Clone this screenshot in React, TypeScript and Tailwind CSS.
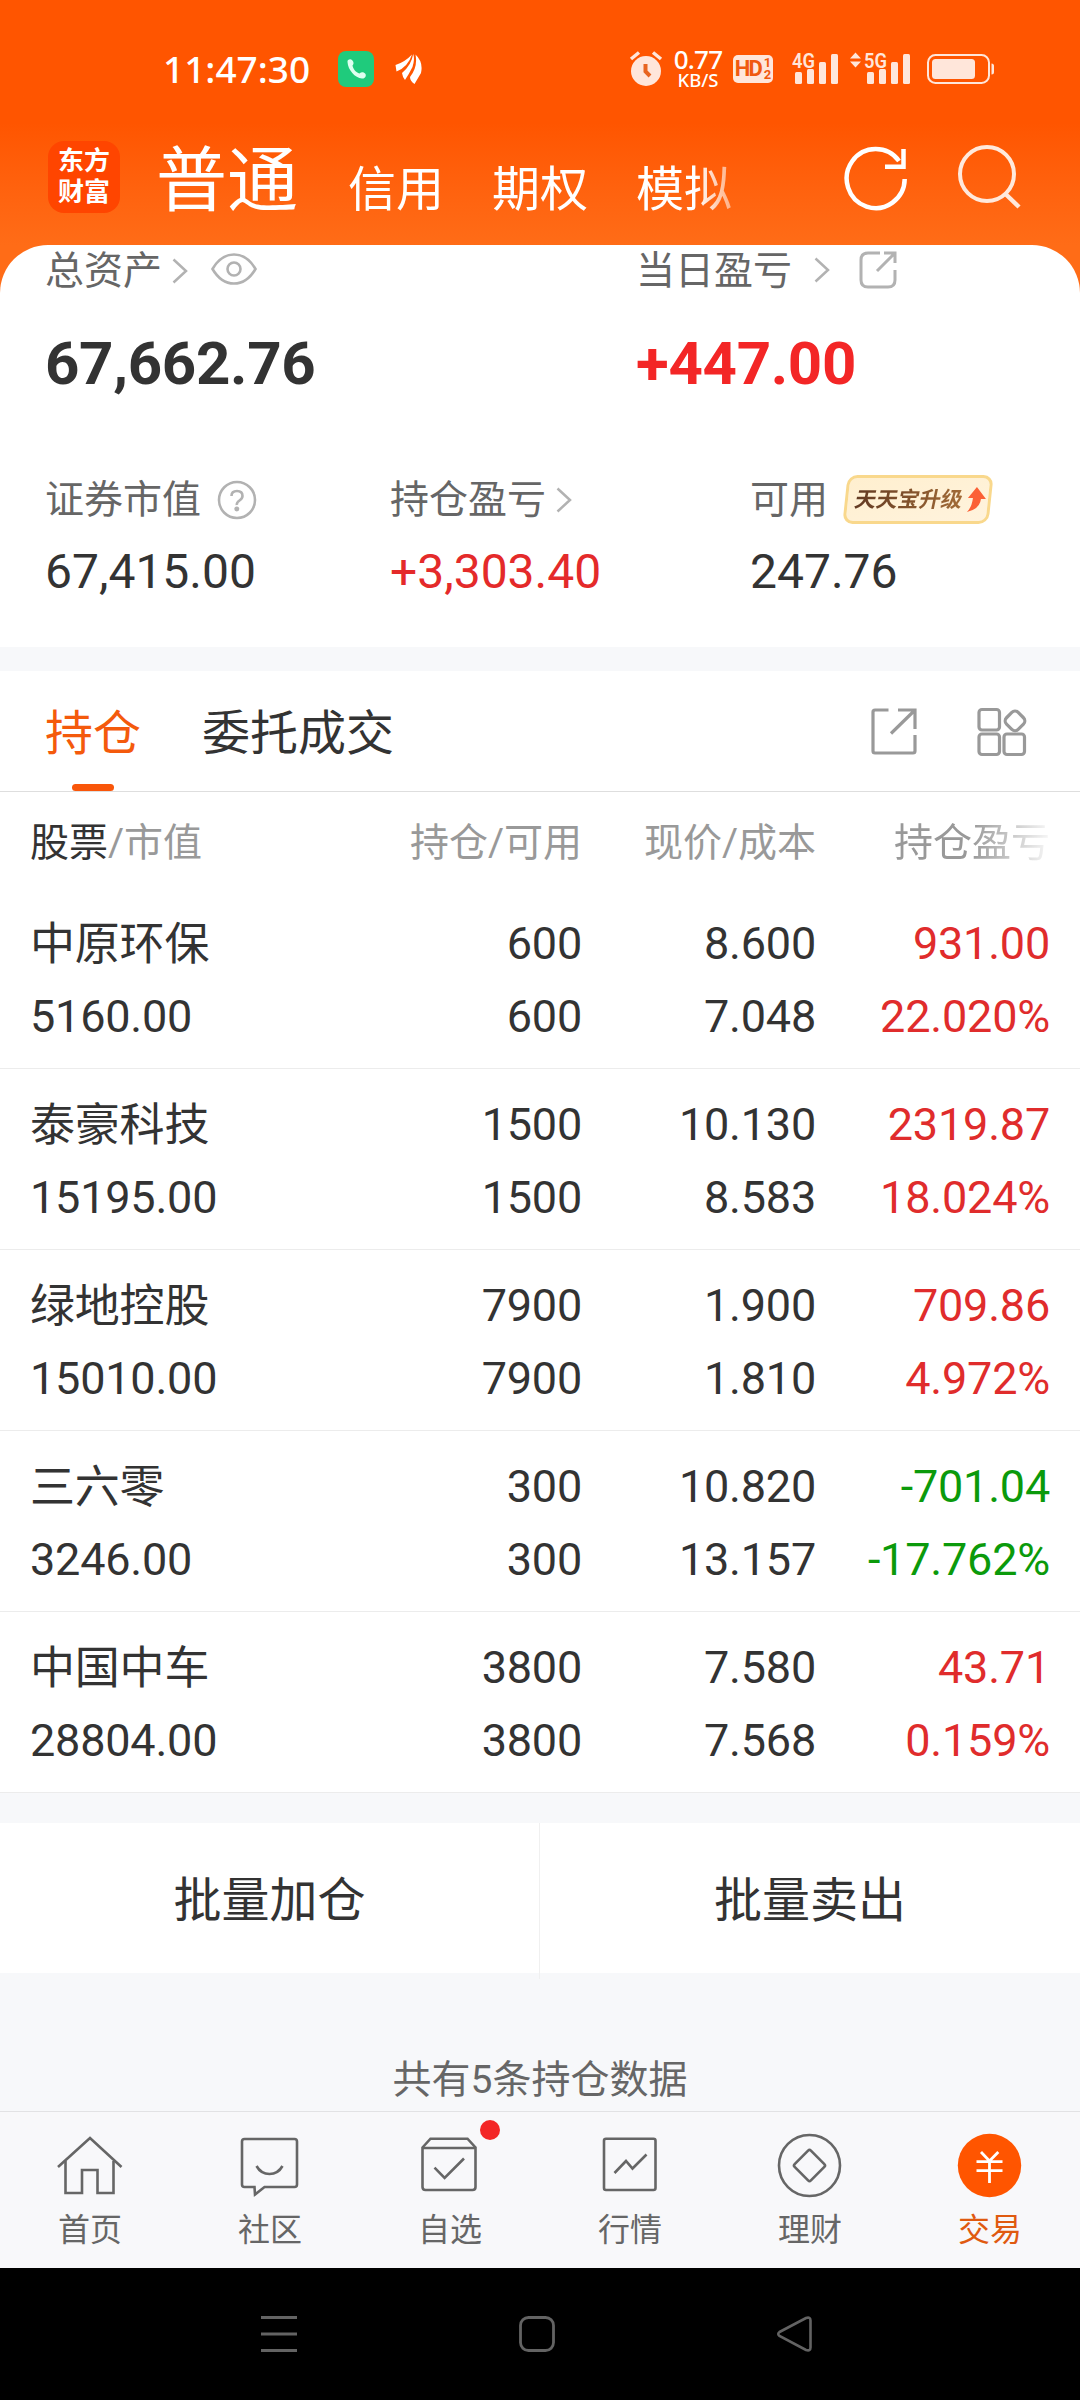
import type { ReactNode } from "react"

type Holding = {
  name: string
  value: string
  amount: string
  available: string
  price: string
  cost: string
  profit: string
  rate: string
  down?: boolean
}

const holdings: Holding[] = [
  { name: "中原环保", value: "5160.00", amount: "600", available: "600", price: "8.600", cost: "7.048", profit: "931.00", rate: "22.020%" },
  { name: "泰豪科技", value: "15195.00", amount: "1500", available: "1500", price: "10.130", cost: "8.583", profit: "2319.87", rate: "18.024%" },
  { name: "绿地控股", value: "15010.00", amount: "7900", available: "7900", price: "1.900", cost: "1.810", profit: "709.86", rate: "4.972%" },
  { name: "三六零", value: "3246.00", amount: "300", available: "300", price: "10.820", cost: "13.157", profit: "-701.04", rate: "-17.762%", down: true },
  { name: "中国中车", value: "28804.00", amount: "3800", available: "3800", price: "7.580", cost: "7.568", profit: "43.71", rate: "0.159%" },
]

type NavItem = {
  label: string
  icon: ReactNode
  active?: boolean
  dot?: boolean
}

const navItems: NavItem[] = [
  {
    label: "首页",
    icon: (
      <>
        <path d="M4 38 36 9 67.5 38" />
        <path d="M11.5 32V64H28V41H43.5V64H59.5V32" />
      </>
    ),
  },
  {
    label: "社区",
    icon: (
      <>
        <path d="M10.5 10H60.5Q63 10 63 12.5V55.5Q63 58 60.5 58H30.5L21 65.5L20.5 58H10.5Q8 58 8 55.5V12.5Q8 10 10.5 10Z" />
        <path d="M22.5 37Q27 45 35.5 45T48.5 37" />
      </>
    ),
  },
  {
    label: "自选",
    dot: true,
    icon: (
      <>
        <path d="M8.5 18.5 16.5 9.7H53.5L61.5 18.5V58Q61.5 61 58.5 61H11.5Q8.5 61 8.5 58Z" />
        <path d="M8.5 19H61.5" />
        <path d="M20.5 38.7 30.6 49 50 29.5" />
      </>
    ),
  },
  {
    label: "行情",
    icon: (
      <>
        <rect x="10" y="9.7" width="51.5" height="51.3" rx="2" />
        <path d="M20.5 44 32 32 38.5 39.5 52.5 25.5" />
      </>
    ),
  },
  {
    label: "理财",
    icon: (
      <>
        <circle cx="35.5" cy="36.5" r="30.5" />
        <rect x="24" y="25" width="23" height="23" rx="2" transform="rotate(45 35.5 36.5)" />
      </>
    ),
  },
  {
    label: "交易",
    active: true,
    icon: (
      <>
        <circle cx="35.5" cy="36.5" r="31.7" fill="#ff5500" stroke="none" />
        <path d="M27 23 35.5 32 44.3 23M35.5 32V54M22.5 32.7H48.5M22.5 41.7H48.5" stroke="#fff" strokeWidth="2.8" />
      </>
    ),
  },
]

function Chevron({ className }: { className?: string }) {
  return (
    <svg className={className} width="16" height="26" viewBox="0 0 16 26" fill="none" stroke="#b2b2b2" strokeWidth="2.5">
      <path d="M1.5 1.5 14 13 1.5 24.5" />
    </svg>
  )
}

function SignalBars() {
  return (
    <>
      <rect x="3" y="23" width="7" height="12" rx="1.5" />
      <rect x="15" y="20" width="7" height="15" rx="1.5" />
      <rect x="27" y="13" width="7" height="22" rx="1.5" />
      <rect x="39" y="5" width="7" height="30" rx="1.5" />
    </>
  )
}

function StatusBar() {
  return (
    <div className="flex h-[138px] items-center pl-[163px] text-white">
      <span className="w-[149px] font-['Noto_Sans'] text-[37px] leading-[40px] font-medium">11:47:30</span>
      <svg className="ml-[26px]" width="36" height="36" viewBox="0 0 36 36">
        <rect width="36" height="36" rx="8" fill="#1fcb7c" />
        <path d="M9.5 11C9 8.5 12.5 7.5 14 9C16 11 16 13 14.5 14.5C15 18 18 21.5 21.5 22.5C23.5 20.5 26 21 27.5 23C28.5 25 27 28 24 27.5C17 27 10 19 9.5 11Z" fill="#dffff0" />
      </svg>
      <svg className="ml-[21px]" width="27" height="32" viewBox="0 0 27 32" fill="#fff">
        <path d="M0.5 12Q10 9 17 1.5Q13 14 1.5 18.5Z" />
        <path d="M18.2 1Q20 6 17.5 14Q14 21 10 27Q7.5 24 7 20Q16.500 12 18.2 1Z" />
        <path d="M20.5 1.5Q28.5 9 26 20L19.5 31Q15 28 15 24Q23 14 20.500 1.5Z" />
      </svg>

      <svg className="ml-[207px]" width="34" height="38" viewBox="0 0 34 38" fill="none" stroke="#ffe6da">
        <circle cx="17" cy="21" r="15" fill="#ffe6da" stroke="none" />
        <path d="M2 9 10 2.5M32 9 24 2.5" strokeWidth="3.5" />
        <path d="M16.5 14V21.5L21 26" stroke="#e8641f" strokeWidth="4" />
      </svg>
      <div className="ml-[9px] flex w-[52px] flex-col items-center pb-[2px] font-['Noto_Sans'] font-medium">
        <span className="text-[26px] leading-[22px] tracking-[-0.8px]">0.77</span>
        <span className="text-[18.5px] leading-[19px]">KB/S</span>
      </div>
      <div className="ml-[9px] flex h-7 w-10 items-center justify-center rounded-[5px] bg-[#ffe6da] font-['Roboto'] text-[#f0590f]">
        <span className="text-[22px] leading-7 font-bold tracking-[-2px]">HD</span>
        <span className="ml-[3px] flex flex-col text-[13px] leading-[12px] font-bold">
          <span>1</span>
          <span>2</span>
        </span>
      </div>
      <svg className="mb-[3px] ml-[19px]" width="48" height="37" viewBox="0 0 48 37" fill="#ffe6da">
        <SignalBars />
        <text x="0" y="18.5" fontSize="21" fontFamily="Roboto" fontWeight="600" textLength="23" lengthAdjust="spacingAndGlyphs">4G</text>
      </svg>
      <svg className="mb-[3px] ml-[10px]" width="62" height="37" viewBox="-14 0 62 37" fill="#ffe6da">
        <SignalBars />
        <path d="M-14 9.5 -8.5 3.5 -3 9.5ZM-14 12.5 -8.5 18.5 -3 12.5Z" />
        <text x="0" y="18.5" fontSize="21" fontFamily="Roboto" fontWeight="600" textLength="23" lengthAdjust="spacingAndGlyphs">5G</text>
      </svg>
      <svg className="ml-[15px]" width="68" height="32" viewBox="0 0 68 32" fill="none">
        <rect x="1" y="2" width="61" height="28" rx="7.5" stroke="#ffe6da" strokeWidth="2" />
        <rect x="5" y="6" width="43" height="20" rx="3.5" fill="#ffe6da" />
        <path d="M64.5 10.5Q67 10.5 67 13V19Q67 21.5 64.5 21.5Z" fill="#ffe6da" />
      </svg>
    </div>
  )
}

function AccountHeader() {
  return (
    <div className="flex h-[107px] pl-12">
      <div className="mt-[3px] flex h-[72px] w-[72px] flex-col items-center justify-center rounded-2xl bg-[#ff4500] text-[26px] leading-[31px] font-bold text-white">
        <span>东方</span>
        <span>财富</span>
      </div>
      <div className="ml-9 flex h-[88px] w-[620px] gap-12 text-white [mask-image:linear-gradient(to_right,#000_540px,transparent_608px)]">
        <span className="w-36 shrink-0 pt-[2px] text-[71px] leading-[81px]">普通</span>
        <span className="shrink-0 pt-3 text-5xl leading-[80px]">信用</span>
        <span className="shrink-0 pt-3 text-5xl leading-[80px]">期权</span>
        <span className="shrink-0 pt-3 text-5xl leading-[80px]">模拟</span>
      </div>
      <svg className="mt-[6px] ml-[67px]" width="66" height="68" viewBox="0 0 66 68" fill="none" stroke="#fff" strokeWidth="4.5">
        <path d="M61.7 35A29 29.5 0 1 1 56 17" />
        <path d="M42 22.8H60.5V5" />
      </svg>
      <svg className="mt-[4px] ml-[47px]" width="68" height="68" viewBox="0 0 68 68" fill="none" stroke="#ffe9dc" strokeWidth="4">
        <circle cx="31" cy="32" r="27" />
        <path d="M49 51.5 63 65" strokeWidth="4.5" />
      </svg>
    </div>
  )
}

function UpgradeBadge() {
  return (
    <div className="mb-[2px] ml-[17px] flex h-12 w-[150px] items-center">
      <div className="flex h-[49px] w-[146px] -skew-x-6 items-center rounded-[10px] border-[3px] border-[#f9d88c] bg-linear-to-br from-[#ffefcf] to-[#fff3dd] pl-[7px]">
        <span className="-skew-x-6 bg-linear-to-r from-[#633a22] to-[#a26b36] bg-clip-text text-[21.5px] leading-[30px] font-bold whitespace-nowrap text-transparent">天天宝升级</span>
        <svg className="ml-[3px] skew-x-6" width="20" height="26" viewBox="0 0 20 26">
          <path d="M11 0 20 12H15Q14 22 1 25Q6 20 7 11H2Z" fill="#fb6035" />
        </svg>
      </div>
    </div>
  )
}

function AssetCard() {
  return (
    <div className="bg-[#ff6c17]">
      <div className="h-[402px] rounded-t-[48px] bg-white pl-[45px] text-[39px] text-[#666]">
        <div className="flex h-[52px]">
          <div className="flex w-[591px] items-center">
            <span className="leading-[54px]">总资产</span>
            <Chevron className="ml-[10px]" />
            <svg className="mb-[5px] ml-[23px]" width="46" height="32" viewBox="0 0 46 32" fill="none" stroke="#b2b2b2" strokeWidth="2.6">
              <path d="M1.5 16Q10 1.5 23 1.5T44.5 16Q36 30.5 23 30.5T1.5 16Z" />
              <circle cx="23" cy="16" r="6.5" />
            </svg>
          </div>
          <div className="flex items-center">
            <span className="leading-[54px]">当日盈亏</span>
            <Chevron className="mb-[3px] ml-[22px]" />
            <svg className="mb-[2px] ml-[29px]" width="38" height="38" viewBox="0 0 38 38" fill="none" stroke="#b2b2b2" strokeWidth="3">
              <path d="M21 2H9Q2 2 2 9V29Q2 36 9 36H29Q36 36 36 29V19" />
              <path d="M25 2H36V12M18 20 35.5 2.5" />
            </svg>
          </div>
        </div>
        <div className="mt-[31px] flex text-[60px] leading-[72px] font-bold tracking-[-0.3px]">
          <span className="w-[591px] text-[#333]">67,662.76</span>
          <span className="text-[#f32626]">+447.00</span>
        </div>
        <div className="mt-[76px] flex h-12 items-center leading-[48px]">
          <div className="flex w-[345px] items-center">
            <span>证券市值</span>
            <svg className="ml-[16px]" width="40" height="40" viewBox="0 0 40 40" fill="none" stroke="#b2b2b2" strokeWidth="2.6">
              <circle cx="20" cy="20" r="18" />
              <path d="M14.5 16Q14.5 11 20 11T25.5 16Q25.5 18.5 22.5 20.5T19.8 25" />
              <circle cx="19.8" cy="29" r="1.2" fill="#b2b2b2" />
            </svg>
          </div>
          <div className="flex w-[360px] items-center">
            <span>持仓盈亏</span>
            <Chevron className="ml-[10px]" />
          </div>
          <span>可用</span>
          <UpgradeBadge />
        </div>
        <div className="mt-[19px] flex text-5xl leading-[58px] text-[#333]">
          <span className="w-[345px]">67,415.00</span>
          <span className="w-[360px] text-[#e42a2a]">+3,303.40</span>
          <span>247.76</span>
        </div>
      </div>
    </div>
  )
}

function Tabs() {
  return (
    <div className="mt-6 flex h-[121px] border-b border-[#dedede] bg-white pl-[45px] text-5xl text-[#333]">
      <div className="flex w-24 flex-col items-center text-[#f45a0c]">
        <span className="h-[113px] leading-[125px]">持仓</span>
        <span className="h-[7px] w-[42px] rounded-full bg-[#f9560a]" />
      </div>
      <span className="ml-[61px] leading-[125px]">委托成交</span>
      <svg className="mt-[36px] ml-[476px]" width="48" height="48" viewBox="0 0 48 48" fill="none" stroke="#999" strokeWidth="3.2">
        <path d="M18.5 3H5Q3 3 3 5V44Q3 46 5 46H43Q45 46 45 44V28" />
        <path d="M28 3H45V22M21 26.5 44.5 3.5" />
      </svg>
      <svg className="mt-[36px] ml-[59px]" width="52" height="52" viewBox="0 0 52 52" fill="none" stroke="#999" strokeWidth="3.2">
        <rect x="2" y="2.5" width="20.5" height="20.5" rx="3" />
        <rect x="2" y="27" width="20.5" height="20.5" rx="3" />
        <rect x="27" y="27" width="20.5" height="20.5" rx="3" />
        <rect x="29.7" y="5.7" width="16.5" height="16.5" rx="4.5" transform="rotate(45 38 14)" />
      </svg>
    </div>
  )
}

function HoldingsTable() {
  return (
    <div className="bg-white text-[#333]">
      <div className="grid h-[96px] grid-cols-[318px_234px_234px_234px] px-[30px] pt-[2px] text-[39px] leading-[98px] text-[#999]">
        <span>
          <span className="text-[#333]">股票</span>/市值
        </span>
        <span className="text-right">持仓/可用</span>
        <span className="text-right">现价/成本</span>
        <span className="text-right [mask-image:linear-gradient(to_right,#000_155px,transparent_240px)]">持仓盈亏</span>
      </div>
      {holdings.map((item) => (
        <div
          key={item.name}
          className="grid h-[181px] grid-cols-[318px_234px_234px_234px] grid-rows-[73px_73px] border-b border-[#ececec] px-[30px] pt-[19px] text-right text-[45px] leading-[73px] tracking-[-0.2px]"
        >
          <span className="pt-[1px] text-left">{item.name}</span>
          <span>{item.amount}</span>
          <span>{item.price}</span>
          <span className={item.down ? "text-[#0b9a0b]" : "text-[#e02c2c]"}>{item.profit}</span>
          <span className="text-left">{item.value}</span>
          <span>{item.available}</span>
          <span>{item.cost}</span>
          <span className={item.down ? "text-[#0b9a0b]" : "text-[#e02c2c]"}>{item.rate}</span>
        </div>
      ))}
    </div>
  )
}

function BottomNav() {
  return (
    <div className="grid h-[157px] grid-cols-6 border-t border-[#e2e2e4] bg-[#f8f8fa]">
      {navItems.map((item) => (
        <div key={item.label} className="relative flex flex-col items-center pt-[17px]">
          <svg width="72" height="72" viewBox="0 0 72 72" fill="none" stroke="#666" strokeWidth="2.6">
            {item.icon}
          </svg>
          {item.dot && <span className="absolute top-2 left-[120px] h-5 w-5 rounded-full bg-[#f32626]" />}
          <span className={`mt-[5px] text-[32px] leading-[49px] ${item.active ? "text-[#e05a10]" : "text-[#666]"}`}>{item.label}</span>
        </div>
      ))}
    </div>
  )
}

function SystemNav() {
  return (
    <div className="flex h-[132px] items-center gap-[218px] bg-black pl-[259px]">
      <svg width="40" height="40" viewBox="0 0 40 40" stroke="#636363" strokeWidth="3">
        <path d="M2 3.5H38M2 20H38M2 36.5H38" />
      </svg>
      <svg width="40" height="40" viewBox="0 0 40 40" fill="none" stroke="#636363" strokeWidth="2.8">
        <rect x="3.5" y="3.5" width="33" height="33" rx="8" />
      </svg>
      <svg width="40" height="40" viewBox="0 0 40 40" fill="none" stroke="#636363" strokeWidth="2.6">
        <path d="M4.5 18 31 4Q35.5 2.5 35.5 6.5V33.5Q35.5 37.5 31 36L4.5 22Q2 20 4.5 18Z" />
      </svg>
    </div>
  )
}

export default function App() {
  return (
    <div className="flex h-[2400px] w-[1080px] flex-col overflow-hidden bg-[#f7f8fa] font-['Roboto','Noto_Sans_CJK_SC',sans-serif]">
      <div className="bg-linear-to-b from-[#ff5500] from-50% to-[#ff6c17]">
        <StatusBar />
        <AccountHeader />
      </div>
      <AssetCard />
      <Tabs />
      <HoldingsTable />
      <div className="mt-[30px] grid h-[150px] grid-cols-2 bg-white text-center text-5xl leading-[156px] text-[#333]">
        <span className="border-r border-[#f0f0f0]">批量加仓</span>
        <span>批量卖出</span>
      </div>
      <div className="h-[138px] pt-[74px] text-center text-[39px] leading-[66px] text-[#666]">共有5条持仓数据</div>
      <BottomNav />
      <SystemNav />
    </div>
  )
}
